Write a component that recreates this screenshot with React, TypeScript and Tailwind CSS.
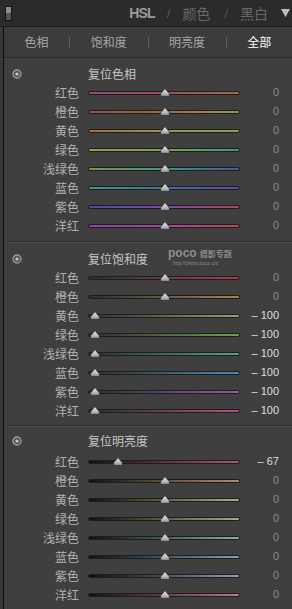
import React from "react";

const CJK = '"Noto Sans CJK SC", "Noto Sans", sans-serif';
const NUM = '"Liberation Sans", Arial, sans-serif';

type Row = { label: string; value: number; grad: string };

const hue: Row[] = [
  { label: "红色", value: 0, grad: "linear-gradient(to right, #9a4a7e, #a24c5c 50%, #a06c44)" },
  { label: "橙色", value: 0, grad: "linear-gradient(to right, #a0484c, #a06a44 50%, #9c964c)" },
  { label: "黄色", value: 0, grad: "linear-gradient(to right, #a06e44, #9a9450 50%, #8ea04e)" },
  { label: "绿色", value: 0, grad: "linear-gradient(to right, #9a9e4c, #78a04e 50%, #3a9c82)" },
  { label: "浅绿色", value: 0, grad: "linear-gradient(to right, #729a4e, #3e9680 50%, #445aa0)" },
  { label: "蓝色", value: 0, grad: "linear-gradient(to right, #3e9a8c, #446ea0 50%, #5a4ca8)" },
  { label: "紫色", value: 0, grad: "linear-gradient(to right, #4c4ca0, #784ca0 50%, #a84a60)" },
  { label: "洋红", value: 0, grad: "linear-gradient(to right, #8844b0, #a8449c 50%, #b84854)" },
];

const sat: Row[] = [
  { label: "红色", value: 0, grad: "linear-gradient(to right, #2e2e2e, #663c44 50%, #aa3c4c)" },
  { label: "橙色", value: 0, grad: "linear-gradient(to right, #2e2e2e, #665a40 50%, #a2884c)" },
  { label: "黄色", value: -100, grad: "linear-gradient(to right, #2e2e2e, #64644c 50%, #9e9e64)" },
  { label: "绿色", value: -100, grad: "linear-gradient(to right, #2e2e2e, #506642 50%, #6ea24c)" },
  { label: "浅绿色", value: -100, grad: "linear-gradient(to right, #2e2e2e, #406660 50%, #4ea296)" },
  { label: "蓝色", value: -100, grad: "linear-gradient(to right, #2e2e2e, #405a6c 50%, #4c8cb2)" },
  { label: "紫色", value: -100, grad: "linear-gradient(to right, #2e2e2e, #5c4666 50%, #965aaa)" },
  { label: "洋红", value: -100, grad: "linear-gradient(to right, #2e2e2e, #6a4058 50%, #b84c86)" },
];

const lum: Row[] = [
  { label: "红色", value: -67, grad: "linear-gradient(to right, #111111, #5a2c38 45%, #a05c6c)" },
  { label: "橙色", value: 0, grad: "linear-gradient(to right, #111111, #5a4a38 45%, #a69074)" },
  { label: "黄色", value: 0, grad: "linear-gradient(to right, #111111, #5a583c 45%, #acaa90)" },
  { label: "绿色", value: 0, grad: "linear-gradient(to right, #111111, #4a5e38 45%, #98b47a)" },
  { label: "浅绿色", value: 0, grad: "linear-gradient(to right, #111111, #385a52 45%, #84b4a8)" },
  { label: "蓝色", value: 0, grad: "linear-gradient(to right, #111111, #384e66 45%, #84a0be)" },
  { label: "紫色", value: 0, grad: "linear-gradient(to right, #111111, #543e60 45%, #ac92bc)" },
  { label: "洋红", value: 0, grad: "linear-gradient(to right, #111111, #60364e 45%, #be7498)" },
];

function Thumb() {
  return (
    <svg width="10" height="9" viewBox="0 0 10 9">
      <defs>
        <linearGradient id="thumbg" x1="0" y1="0" x2="0" y2="1">
          <stop offset="0" stopColor="#e4e4e4" />
          <stop offset="0.6" stopColor="#bdbdbd" />
          <stop offset="1" stopColor="#8c8c8c" />
        </linearGradient>
      </defs>
      <path
        d="M5 0.6 L9.4 5.8 L9.4 8.4 L0.6 8.4 L0.6 5.8 Z"
        fill="url(#thumbg)"
        stroke="#262626"
        strokeWidth="0.7"
        strokeLinejoin="round"
      />
    </svg>
  );
}

function ResetIcon() {
  return (
    <svg width="10" height="10" viewBox="0 0 10 10">
      <circle cx="5" cy="5" r="4" fill="#555" stroke="#9c9c9c" strokeWidth="1.3" />
      <circle cx="5" cy="5" r="1.6" fill="#c8c8c8" />
    </svg>
  );
}

function SliderRow({ row }: { row: Row }) {
  const center = 77 + row.value * 0.7;
  const text = row.value === 0 ? "0" : `– ${Math.abs(row.value)}`;
  return (
    <div className="flex h-[19px] items-center">
      <div
        className="w-[75px] text-right text-[12px] leading-none text-[#b2b2b2]"
        style={{ fontFamily: CJK }}
      >
        {row.label}
      </div>
      <div
        className="relative ml-[9px] h-[4px] w-[152px] rounded-full border border-[#1e1e1e]"
        style={{ background: row.grad }}
      >
        <div className="absolute top-[-4px] h-[9px] w-[10px]" style={{ left: center - 6 }}>
          <Thumb />
        </div>
      </div>
      <div
        className={
          "w-[39px] text-right text-[11px] leading-none " +
          (row.value === 0 ? "text-[#8a8a8a]" : "text-[#dedede]")
        }
        style={{ fontFamily: NUM }}
      >
        {text}
      </div>
    </div>
  );
}

function Header({ title, watermark }: { title: string; watermark?: boolean }) {
  return (
    <div className="flex h-[19px] items-center">
      <div className="ml-[8px] flex w-[10px] items-center">
        <ResetIcon />
      </div>
      <div
        className="ml-[66px] text-[12px] leading-none text-[#c6c6c6]"
        style={{ fontFamily: CJK }}
      >
        {title}
      </div>
      {watermark && (
        <div className="ml-[20px] mt-[-3px] flex flex-col items-start">
          <div className="flex items-center">
            <span
              className="text-[12px] font-bold leading-[11px] text-[#8e8e8e]"
              style={{ fontFamily: NUM }}
            >
              poco
            </span>
            <span
              className="ml-[3px] text-[8px] font-bold leading-[9px] text-[#8a8a8a]"
              style={{ fontFamily: CJK }}
            >
              摄影专题
            </span>
          </div>
          <span
            className="ml-[5px] mt-[2px] text-[5px] leading-[5px] text-[#8a8a8a]"
            style={{ fontFamily: NUM }}
          >
            http://photo.poco.cn/
          </span>
        </div>
      )}
    </div>
  );
}

function Separator() {
  return <div className="ml-[4px] h-[2px] border-t border-b border-t-[#2b2b2b] border-b-[#4a4a4a]" />;
}

export default function App() {
  return (
    <div className="flex h-[609px] w-[292px] flex-col overflow-hidden bg-[#2b2b2b]">
      {/* top bar */}
      <div className="flex h-[26px] shrink-0 items-center">
        <div className="ml-[5px] flex h-[15px] w-[7px] flex-col border border-[#161616]">
          <div className="h-1/2 bg-[#8c8c8c]" />
          <div className="h-1/2 bg-[#555]" />
        </div>
        <div className="ml-auto mr-[2px] flex items-center leading-none">
          <span
            className="text-[14px] font-bold tracking-[-0.8px] text-[#9c9c9c]"
            style={{ fontFamily: NUM }}
          >
            HSL
          </span>
          <span className="ml-[12px] text-[13px] text-[#555]" style={{ fontFamily: NUM }}>
            /
          </span>
          <span className="ml-[12px] text-[14px] text-[#686868]" style={{ fontFamily: CJK }}>
            颜色
          </span>
          <span className="ml-[14px] text-[13px] text-[#555]" style={{ fontFamily: NUM }}>
            /
          </span>
          <span className="ml-[12px] text-[14px] text-[#686868]" style={{ fontFamily: CJK }}>
            黑白
          </span>
          <svg className="ml-[13px]" width="9" height="8" viewBox="0 0 9 8">
            <path d="M0 0 L9 0 L4.5 8 Z" fill="#bdbdbd" />
          </svg>
        </div>
      </div>
      <div className="h-px shrink-0 bg-[#1a1a1a]" />
      {/* body */}
      <div className="flex flex-1">
        <div className="w-[3px] bg-[#383838]" />
        <div className="flex flex-1 flex-col border-l border-[#0a0a0a] bg-[#3f3f3f]">
          {/* tabs */}
          <div
            className="flex h-[31px] shrink-0 items-center border-b border-[#2a2a2a] bg-[#3c3c3c] text-[12px] leading-none"
            style={{ fontFamily: CJK }}
          >
            <div className="flex-auto text-center text-[#a6a6a6]">色相</div>
            <div className="h-[11px] w-px bg-[#5e5e5e]" />
            <div className="flex-auto text-center text-[#a6a6a6]">饱和度</div>
            <div className="h-[11px] w-px bg-[#5e5e5e]" />
            <div className="flex-auto text-center text-[#a6a6a6]">明亮度</div>
            <div className="h-[11px] w-px bg-[#5e5e5e]" />
            <div className="flex-auto text-center text-white">全部</div>
          </div>
          {/* section 1 */}
          <div className="pt-[6px] pb-[6px]">
            <Header title="复位色相" />
            {hue.map((r) => (
              <SliderRow key={r.label} row={r} />
            ))}
          </div>
          <Separator />
          {/* section 2 */}
          <div className="pt-[6px] pb-[5px]">
            <Header title="复位饱和度" watermark />
            {sat.map((r) => (
              <SliderRow key={r.label} row={r} />
            ))}
          </div>
          <Separator />
          {/* section 3 */}
          <div className="pt-[4px]">
            <Header title="复位明亮度" />
            <div className="h-[2px]" />
            {lum.map((r) => (
              <SliderRow key={r.label} row={r} />
            ))}
          </div>
        </div>
      </div>
    </div>
  );
}
